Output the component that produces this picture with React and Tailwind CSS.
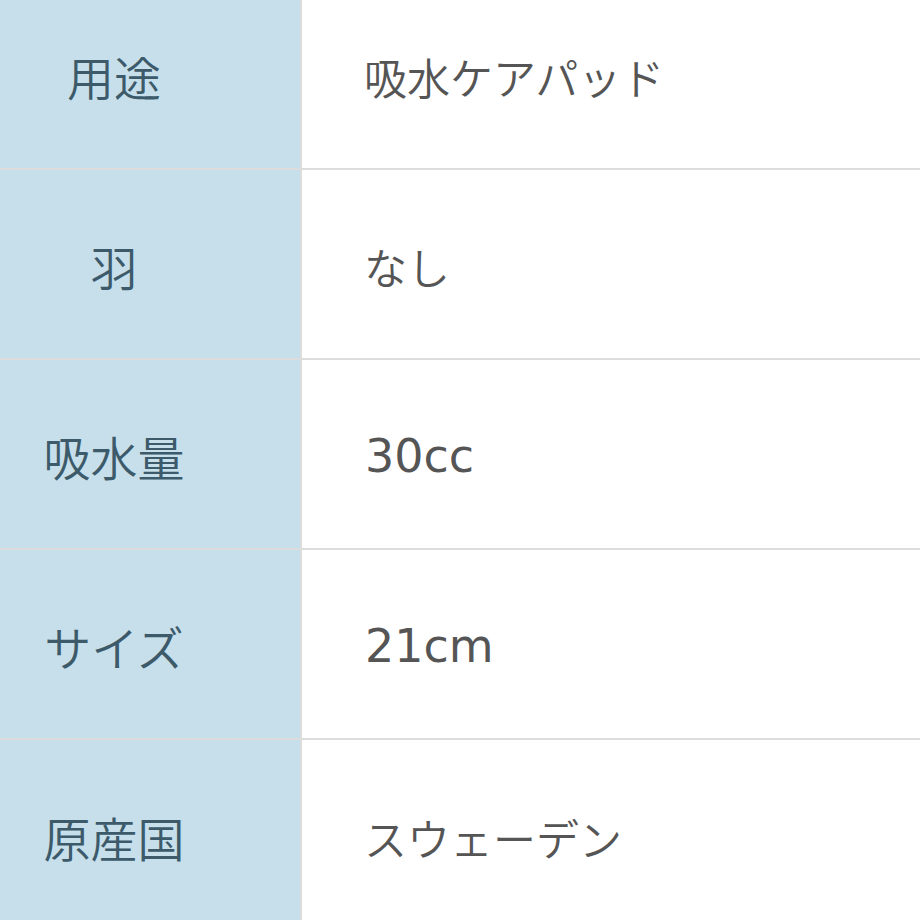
import React from 'react';

const rows = [
  { label: '用途', value: '吸水ケアパッド' },
  { label: '羽', value: 'なし' },
  { label: '吸水量', value: '30cc', latin: true },
  { label: 'サイズ', value: '21cm', latin: true },
  { label: '原産国', value: 'スウェーデン' },
];

const App = () => {
  return (
    <div
      className="w-[920px] h-[920px] overflow-hidden bg-white"
      style={{ fontFamily: '"Noto Sans CJK JP", "Noto Sans", sans-serif' }}
    >
      <div className="-mt-[20px]">
        {rows.map((row, i) => (
          <div
            key={row.label}
            className={`flex h-[190px] ${i < rows.length - 1 ? 'border-b-[2px] border-[#dcdcdc]' : ''}`}
          >
            {/* label cell */}
            <div className="w-[300px] shrink-0 bg-[#c6dfea] flex items-center justify-center pr-[72px] pt-[4px] text-[47px] font-[350] text-[#3c5a6a]">
              {row.label}
            </div>
            <div className="w-[2px] shrink-0 bg-[#dcdcdc]"></div>
            {/* value cell */}
            {row.latin ? (
              <div className="flex-1 flex items-center pl-[63px] pt-[4px] text-[46px] font-normal text-[#555555] font-['DejaVu_Sans',sans-serif]">
                {row.value}
              </div>
            ) : (
              <div className="flex-1 flex items-center pl-[62px] pt-[4px] text-[43px] font-[350] text-[#555555]">
                {row.value}
              </div>
            )}
          </div>
        ))}
      </div>
    </div>
  );
};

export default App;
